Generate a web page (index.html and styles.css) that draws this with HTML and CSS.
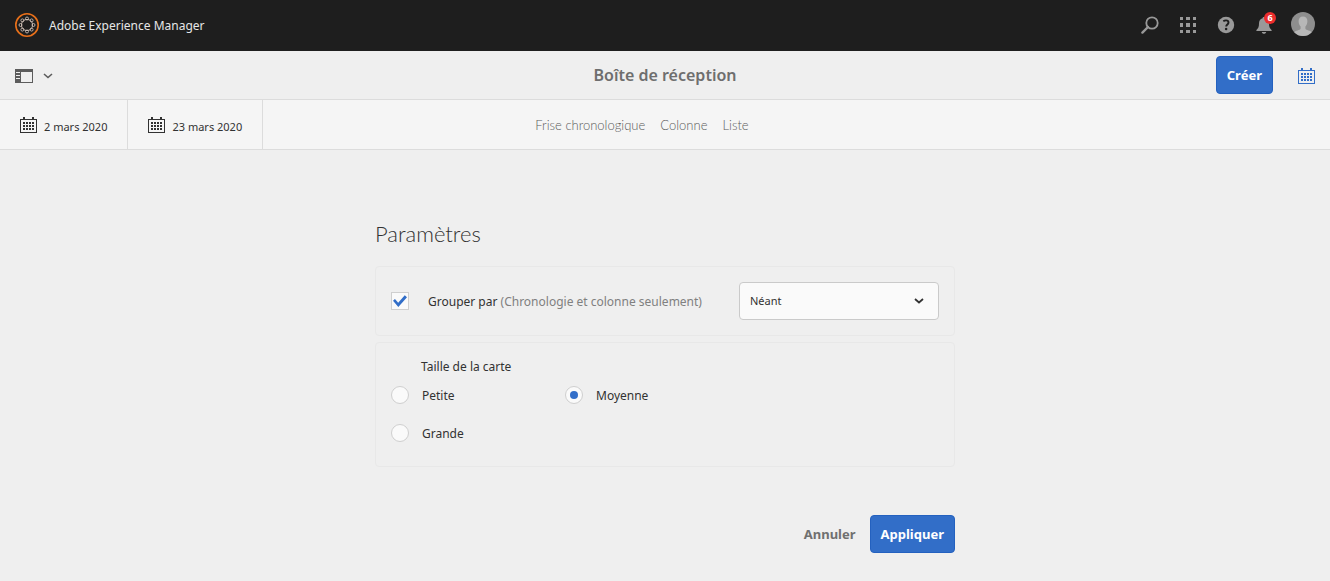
FILE: index.html
```html
<!DOCTYPE html>
<html lang="fr">
<head>
<meta charset="utf-8">
<meta name="viewport" content="width=device-width, initial-scale=1">
<title>Boîte de réception</title>
<link rel="stylesheet" href="styles.css">
</head>
<body>
<svg class="sprite" aria-hidden="true">
  <symbol id="calendar" viewBox="0 0 17 16">
    <path fill="currentColor" fill-rule="evenodd" d="M0 2h17v14H0zM1 3v12h15V3z"/>
    <path fill="currentColor" d="M3 0h2v3H3zm9 0h2v3h-2zM3 5h2v2H3zm3 0h2v2H6zm3 0h2v2H9zm3 0h2v2h-2zM3 8h2v2H3zm3 0h2v2H6zm3 0h2v2H9zm3 0h2v2h-2zM3 11h2v2H3zm3 0h2v2H6zm3 0h2v2H9zm3 0h2v2h-2z"/>
  </symbol>
</svg>

<header class="shell">
  <a class="brand" href="#">
    <svg class="logo" width="24" height="24" viewBox="0 0 24 24" fill="none" aria-hidden="true">
      <circle cx="12" cy="12" r="11.2" stroke="#e8701a" stroke-width="1.6"/>
      <g stroke="#d9c9bf" stroke-width="0.8">
        <circle cx="12" cy="12" r="5.6"/>
        <circle cx="12" cy="5.5" r="1.5"/><circle cx="16.600" cy="7.400" r="1.500"/><circle cx="18.500" cy="12" r="1.500"/><circle cx="16.600" cy="16.600" r="1.500"/>
        <circle cx="12" cy="18.500" r="1.500"/><circle cx="7.400" cy="16.600" r="1.500"/><circle cx="5.500" cy="12" r="1.500"/><circle cx="7.400" cy="7.400" r="1.500"/>
      </g>
    </svg>
    <span>Adobe Experience Manager</span>
  </a>
  <nav class="shell-tools" aria-label="Outils">
    <button class="icon-button" type="button" aria-label="Rechercher">
      <svg width="18" height="18" viewBox="0 0 18 18" fill="none" stroke="currentColor"><circle cx="11" cy="7" r="5.7" stroke-width="1.8"/><path d="M7 11l-5.6 5.600" stroke-width="2.4" stroke-linecap="round"/></svg>
    </button>
    <button class="icon-button" type="button" aria-label="Solutions">
      <svg width="16" height="16" viewBox="0 0 16 16" fill="currentColor"><path d="M0 0h3v3H0zm6 0h4v3H6zm7 0h3v3h-3zM0 6h3v4H0zm6 0h4v4H6zm7 0h3v4h-3zM0 13h3v3H0zm6 0h4v3H6zm7 0h3v3h-3z"/></svg>
    </button>
    <button class="icon-button" type="button" aria-label="Aide">
      <svg width="18" height="18" viewBox="0 0 18 18"><circle cx="9" cy="9" r="8.200" fill="currentColor"/><path d="M6.300 5.300c.8-.6 1.700-.9 2.700-.9 1.500 0 2.500.8 2.500 2.100 0 2-2.300 2-2.300 4.100" fill="none" stroke="#1e1e1e" stroke-width="1.9"/><circle cx="9.100" cy="13" r="1.250" fill="#1e1e1e"/></svg>
    </button>
    <button class="icon-button" type="button" aria-label="Notifications : 6">
      <svg width="18" height="18" viewBox="0 0 18 18" fill="currentColor"><path d="M9 1c.9 0 1.400.5 1.400 1.300C13 3 14 5 14 7.500c0 3.500.8 5 2.600 6.500v1H1.400v-1C3.200 12.500 4 11 4 7.500 4 5 5 3 7.600 2.300 7.600 1.500 8.100 1 9 1zM6.800 16h4.400c-.2 1-1 1.800-2.200 1.800S7 17 6.800 16z"/></svg>
      <span class="badge">6</span>
    </button>
    <button class="icon-button avatar" type="button" aria-label="Profil">
      <svg width="24" height="24" viewBox="0 0 24 24"><defs><clipPath id="round"><circle cx="12" cy="12" r="12"/></clipPath></defs><g clip-path="url(#round)"><path fill="#8e8e8e" d="M0 0h24v24H0z"/><path fill="#b7b7b7" d="M12 4.500c2.800 0 4.400 1.800 4.400 4.600 0 2.300-.8 4.300-2 5.400v2.200c.4 1.500 5.600 1.700 6.600 4V24H3v-3.300c1-2.300 6.200-2.500 6.600-4v-2.200c-1.200-1.100-2-3.100-2-5.400 0-2.800 1.600-4.600 4.400-4.600z"/></g></svg>
    </button>
  </nav>
</header>

<div class="action-bar">
  <button class="rail-toggle" type="button" aria-label="Afficher le rail">
    <svg width="18" height="14" viewBox="0 0 18 14"><path fill="currentColor" fill-rule="evenodd" d="M0 0h18v14H0zM6 3v10h11V3zM1 3v1h4V3zm0 3v1h4V6zm0 3v1h4V9z"/></svg>
    <svg width="10" height="6" viewBox="0 0 10 6" fill="none" stroke="currentColor" stroke-width="1.600"><path d="M1 1l4 3.500L9 1"/></svg>
  </button>
  <h1 class="page-title">Boîte de réception</h1>
  <div class="action-end">
    <button class="button primary" type="button">Créer</button>
    <button class="icon-button view-button" type="button" aria-label="Vue Calendrier"><svg width="17" height="16"><use href="#calendar"/></svg></button>
  </div>
</div>

<div class="filter-bar">
  <div class="dates">
    <button class="date" type="button"><svg width="17" height="16" aria-hidden="true"><use href="#calendar"/></svg><span>2 mars 2020</span></button>
    <button class="date" type="button"><svg width="17" height="16" aria-hidden="true"><use href="#calendar"/></svg><span>23 mars 2020</span></button>
  </div>
  <nav class="views" aria-label="Affichage">
    <a href="#">Frise chronologique</a>
    <a href="#">Colonne</a>
    <a href="#">Liste</a>
  </nav>
</div>

<main>
  <form class="settings">
    <h2 class="settings-title">Paramètres</h2>
    <section class="panel group-panel">
      <label class="choice group-choice">
        <input class="checkbox" type="checkbox" checked>
        <span class="choice-text">Grouper par <span class="hint">(Chronologie et colonne seulement)</span></span>
      </label>
      <div class="select-wrap">
        <select class="select" aria-label="Grouper par"><option>Néant</option></select>
        <svg class="select-arrow" width="10" height="6" viewBox="0 0 10 6" fill="none" stroke="currentColor" stroke-width="1.800" aria-hidden="true"><path d="M1 1l4 3.500L9 1"/></svg>
      </div>
    </section>
    <section class="panel size-panel" role="radiogroup" aria-labelledby="size-title">
      <h3 class="size-title" id="size-title">Taille de la carte</h3>
      <div class="sizes">
        <label class="choice"><input class="radio" type="radio" name="size"><span class="choice-text">Petite</span></label>
        <label class="choice"><input class="radio" type="radio" name="size" checked><span class="choice-text">Moyenne</span></label>
        <label class="choice"><input class="radio" type="radio" name="size"><span class="choice-text">Grande</span></label>
      </div>
    </section>
    <div class="form-actions">
      <button class="button quiet" type="button">Annuler</button>
      <button class="button primary" type="button">Appliquer</button>
    </div>
  </form>
</main>
</body>
</html>
```
FILE: styles.css
```css
* {
  box-sizing: border-box;
}

body {
  margin: 0;
  background: #efefef;
  color: #323232;
  font: 12px/20px "Noto Sans", "Open Sans", sans-serif;
}

button,
select {
  font: inherit;
}

button {
  padding: 0;
  border: 0;
  background: none;
  color: inherit;
  cursor: pointer;
}

a {
  color: inherit;
  text-decoration: none;
}

h1,
h2,
h3 {
  margin: 0;
}

svg {
  display: block;
  flex: none;
}

.sprite {
  position: absolute;
  width: 0;
  height: 0;
}

.shell {
  display: flex;
  align-items: center;
  justify-content: space-between;
  min-height: 51px;
  padding: 0 15px 1px;
  background: #1e1e1e;
  color: #999;
}

.brand {
  display: flex;
  align-items: center;
  gap: 10px;
  color: #e6e6e6;
}

.brand span {
  padding-top: 2px;
}

.shell-tools {
  display: flex;
  align-items: center;
  gap: 20px;
}

.icon-button {
  position: relative;
  display: grid;
  place-items: center;
  min-width: 18px;
}

.avatar {
  margin-left: -2px;
  padding-bottom: 2px;
}

.badge {
  position: absolute;
  top: -4px;
  right: -3px;
  width: 12px;
  height: 12px;
  border-radius: 50%;
  background: #ec2d2d;
  color: #fff;
  font-size: 9px;
  font-weight: 700;
  line-height: 12px;
  text-align: center;
}

.action-bar {
  display: grid;
  grid-template-columns: 1fr auto 1fr;
  align-items: center;
  min-height: 49px;
  padding: 0 15px;
  border-bottom: 1px solid #dcdcdc;
}

.rail-toggle {
  display: flex;
  align-items: center;
  justify-self: start;
  gap: 10px;
  padding-top: 2px;
  color: #5c5c5c;
}

.page-title {
  color: #6e6e6e;
  font-size: 16px;
  font-weight: 600;
}

.action-end {
  display: flex;
  align-items: center;
  justify-self: end;
  gap: 24px;
}

.view-button {
  padding-top: 2px;
  color: #326ec8;
}

.button {
  height: 38px;
  padding: 0 10px;
  border: 1px solid transparent;
  border-radius: 4px;
  font-size: 13px;
  font-weight: 700;
}

.primary {
  border-color: #2461bf;
  background: #326ec8;
  color: #fff;
}

.quiet {
  color: #707070;
}

.filter-bar {
  display: grid;
  grid-template-columns: 1fr auto 1fr;
  align-items: center;
  min-height: 50px;
  padding-right: 46px;
  border-bottom: 1px solid #dcdcdc;
  background: #f5f5f5;
}

.dates {
  display: flex;
  align-self: stretch;
}

.date {
  display: flex;
  align-items: center;
  gap: 7px;
  padding: 0 20px;
  border-right: 1px solid #dcdcdc;
  font-size: 11px;
}

.date span {
  padding-top: 4px;
}

.views {
  display: flex;
  gap: 15px;
  color: #5c5c5c;
  font-family: Lato, "Noto Sans", sans-serif;
  font-size: 13px;
  font-weight: 300;
}

.settings {
  max-width: 580px;
  margin: 68px auto 28px;
}

.settings-title {
  margin-bottom: 16px;
  font-family: Lato, "Noto Sans", sans-serif;
  font-size: 22px;
  font-weight: 300;
  line-height: 32px;
}

.panel {
  border: 1px solid #e8e8e8;
  border-radius: 4px;
  padding: 15px;
}

.group-panel {
  display: flex;
  align-items: center;
  justify-content: space-between;
  margin-bottom: 6px;
}

.choice {
  display: flex;
  align-items: center;
  gap: 13px;
}

.choice-text {
  padding-top: 2px;
}

.group-choice {
  gap: 19px;
}

.hint {
  color: #808080;
}

.checkbox,
.radio {
  display: grid;
  place-content: center;
  width: 18px;
  height: 18px;
  margin: 0;
  border: 1px solid #cfcfcf;
  background: #fafafa;
  appearance: none;
}

.checkbox:checked::before {
  width: 14px;
  height: 12px;
  background: #326ec8;
  clip-path: polygon(0 48%, 14% 33%, 37% 64%, 84% 3%, 100% 18%, 38% 100%);
  content: "";
}

.radio {
  border-radius: 50%;
}

.radio:checked::before {
  width: 8px;
  height: 8px;
  border-radius: 50%;
  background: #326ec8;
  content: "";
}

.select-wrap {
  position: relative;
  width: 200px;
}

.select {
  width: 100%;
  height: 38px;
  padding: 0 10px;
  border: 1px solid #cacaca;
  border-radius: 4px;
  background: #fafafa;
  color: #323232;
  font-size: 11px;
  appearance: none;
}

.select-arrow {
  position: absolute;
  top: 16px;
  right: 15px;
  pointer-events: none;
}

.size-panel {
  padding: 14px 15px;
}

.size-title {
  padding: 0 30px;
  font-size: 12px;
  font-weight: 400;
  line-height: 19px;
}

.sizes {
  display: grid;
  grid-template-columns: 174px 1fr;
}

.sizes .choice {
  min-height: 38px;
}

.form-actions {
  display: flex;
  justify-content: flex-end;
  gap: 3px;
  margin-top: 48px;
}
```
